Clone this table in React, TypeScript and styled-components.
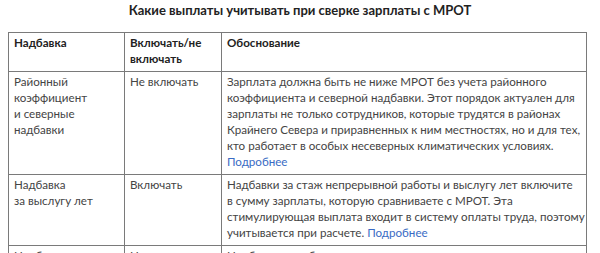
import styled, { createGlobalStyle } from "styled-components";

const GlobalStyle = createGlobalStyle`
  body {
    margin: 0;
    background: #ffffff;
    font-family: "Lato", "Open Sans", sans-serif;
    color: #333333;
  }
`;

const Page = styled.div`
  width: 600px;
  padding: 2px 8px 0 8px;
  box-sizing: border-box;
`;

const Title = styled.h3`
  margin: 0 0 14px 0;
  text-align: center;
  font-size: 13px;
  line-height: 16px;
  font-weight: 700;
  color: #222222;
`;

const Table = styled.table`
  width: 578px;
  border-collapse: collapse;
  table-layout: fixed;
  font-size: 11.6px;
  line-height: 16px;
`;

const Col = styled.col<{ $width: number }>`
  width: ${props => props.$width}px;
`;

const HeadCell = styled.th`
  border: 1px solid #7a7a7a;
  padding: 2px 1px 4px 5px;
  text-align: left;
  vertical-align: top;
  font-weight: 700;
  color: #222222;
`;

const Cell = styled.td`
  border: 1px solid #7a7a7a;
  padding: 2px 1px 4px 5px;
  vertical-align: top;
  color: #444444;
`;

const More = styled.a`
  color: #3a6bc4;
  text-decoration: none;
`;

type Row = {
  name: string[];
  include: string;
  reason: string;
  more?: boolean;
};

const rows: Row[] = [
  {
    name: ["Районный", "коэффициент", "и северные", "надбавки"],
    include: "Не включать",
    reason:
      "Зарплата должна быть не ниже МРОТ без учета районного коэффициента и северной надбавки. Этот порядок актуален для зарплаты не только сотрудников, которые трудятся в районах Крайнего Севера и приравненных к ним местностях, но и для тех, кто работает в особых несеверных климатических условиях.",
    more: true,
  },
  {
    name: ["Надбавка", "за выслугу лет"],
    include: "Включать",
    reason:
      "Надбавки за стаж непрерывной работы и выслугу лет включите в\u00a0сумму зарплаты, которую сравниваете с МРОТ. Эта стимулирующая выплата входит в систему оплаты труда, поэтому учитывается при расчете.",
    more: true,
  },
  {
    name: ["Надбавки", "за работу ночью"],
    include: "Не включать",
    reason:
      "Надбавки за работу ночью, сверхурочные, доплату за совмещение должностей в сумму зарплаты не включайте.",
  },
];

export default function App() {
  return (
    <Page>
      <GlobalStyle />
      <Title>Какие выплаты учитывать при сверке зарплаты с МРОТ</Title>
      <Table>
        <colgroup>
          <Col $width={116} />
          <Col $width={97} />
          <Col $width={365} />
        </colgroup>
        <thead>
          <tr>
            <HeadCell>Надбавка</HeadCell>
            <HeadCell>Включать/не включать</HeadCell>
            <HeadCell>Обоснование</HeadCell>
          </tr>
        </thead>
        <tbody>
          {rows.map(row => (
            <tr key={row.name.join(" ")}>
              <Cell>
                {row.name.map((part, i) => (
                  <span key={part}>
                    {i > 0 && <br />}
                    {part}
                  </span>
                ))}
              </Cell>
              <Cell>{row.include}</Cell>
              <Cell>
                {row.reason}
                {row.more && (
                  <>
                    {" "}
                    <More href="#">Подробнее</More>
                  </>
                )}
              </Cell>
            </tr>
          ))}
        </tbody>
      </Table>
    </Page>
  );
}
